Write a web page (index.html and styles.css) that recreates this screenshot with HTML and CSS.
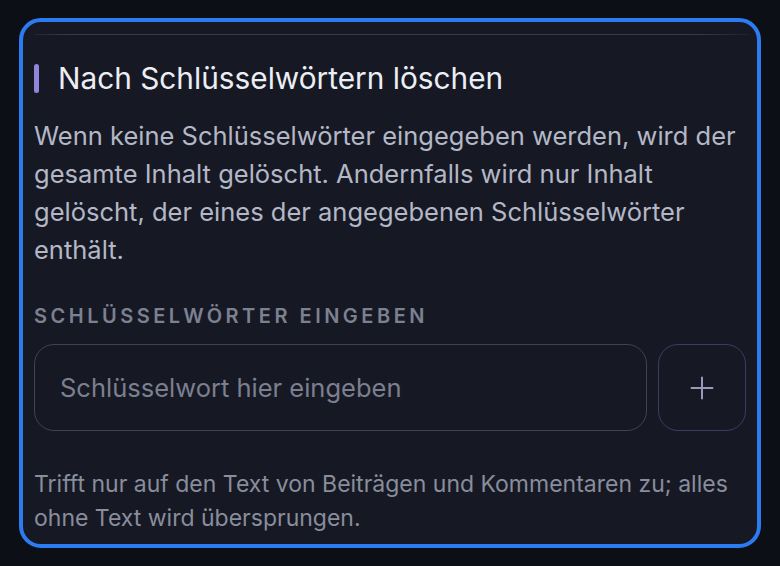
FILE: index.html
```html
<!DOCTYPE html>
<html lang="de">
<head>
<meta charset="utf-8">
<title>Nach Schlüsselwörtern löschen</title>
<link rel="stylesheet" href="styles.css">
</head>
<body>
<div class="frame">
  <div class="rule"></div>
  <h2 class="title"><span class="accent"></span>Nach Schlüsselwörtern löschen</h2>
  <p class="desc">Wenn keine Schlüsselwörter eingegeben werden, wird der gesamte Inhalt gelöscht. Andernfalls wird nur Inhalt gelöscht, der eines der angegebenen Schlüsselwörter enthält.</p>
  <div class="label">Schlüsselwörter eingeben</div>
  <div class="input-row">
    <input class="field" type="text" placeholder="Schlüsselwort hier eingeben">
    <button class="add" type="button" aria-label="Hinzufügen">
      <svg width="24" height="24" viewBox="0 0 24 24"><path d="M12 1.5v21M1.5 12h21" stroke="#9b99ba" stroke-width="2" stroke-linecap="round" fill="none"/></svg>
    </button>
  </div>
  <p class="note">Trifft nur auf den Text von Beiträgen und Kommentaren zu; alles ohne Text wird übersprungen.</p>
</div>
</body>
</html>
```
FILE: styles.css
```css
* { box-sizing: border-box; }
html, body { margin: 0; padding: 0; }
body {
  background: #0d0f16;
  width: 780px;
  height: 566px;
  overflow: hidden;
  font-family: Inter, "Noto Sans", "Liberation Sans", sans-serif;
  padding-top: 18px;
}
.frame {
  margin: 0 19px;
  height: 530px;
  border: 4px solid #2a7cf0;
  border-radius: 22px;
  background: #161924;
  padding: 12px 11px 0;
  overflow: hidden;
  display: flex;
  flex-direction: column;
}
.rule {
  height: 1px;
  margin: 0 -4px 0 0;
  background: linear-gradient(90deg, rgba(60,63,75,0.3) 0%, #3a3d49 5%, #3a3d49 92%, rgba(60,63,75,0.2) 100%);
}
.title {
  margin: 25px 0 0;
  display: flex;
  align-items: center;
  gap: 19px;
  font-size: 29.8px;
  line-height: 36px;
  font-weight: 400;
  color: #eceef5;
}
.accent {
  width: 5px;
  height: 29px;
  border-radius: 3px;
  background: #8f85db;
  flex: none;
}
.desc {
  margin: 21px 0 0;
  font-size: 25.5px;
  line-height: 38px;
  color: #b3b7c6;
}
.label {
  margin-top: 35px;
  font-size: 20px;
  line-height: 24px;
  font-weight: 600;
  letter-spacing: 3.5px;
  text-transform: uppercase;
  color: #7c8192;
}
.input-row {
  margin-top: 16px;
  display: flex;
  gap: 11px;
  height: 87px;
}
.field {
  flex: 1;
  min-width: 0;
  height: 87px;
  border: 1.5px solid #41444f;
  border-radius: 20px;
  background: transparent;
  padding: 0 25px;
  font-family: inherit;
  font-size: 25.5px;
  color: #d0d3de;
  outline: none;
}
.field::placeholder { color: #7b7f8f; }
.add {
  width: 88px;
  height: 87px;
  flex: none;
  border: 1.5px solid #3d3a68;
  border-radius: 20px;
  background: transparent;
  display: flex;
  align-items: center;
  justify-content: center;
  padding: 0;
}
.note {
  margin: 36px 0 0;
  font-size: 23px;
  line-height: 34px;
  color: #898d9c;
}
```
